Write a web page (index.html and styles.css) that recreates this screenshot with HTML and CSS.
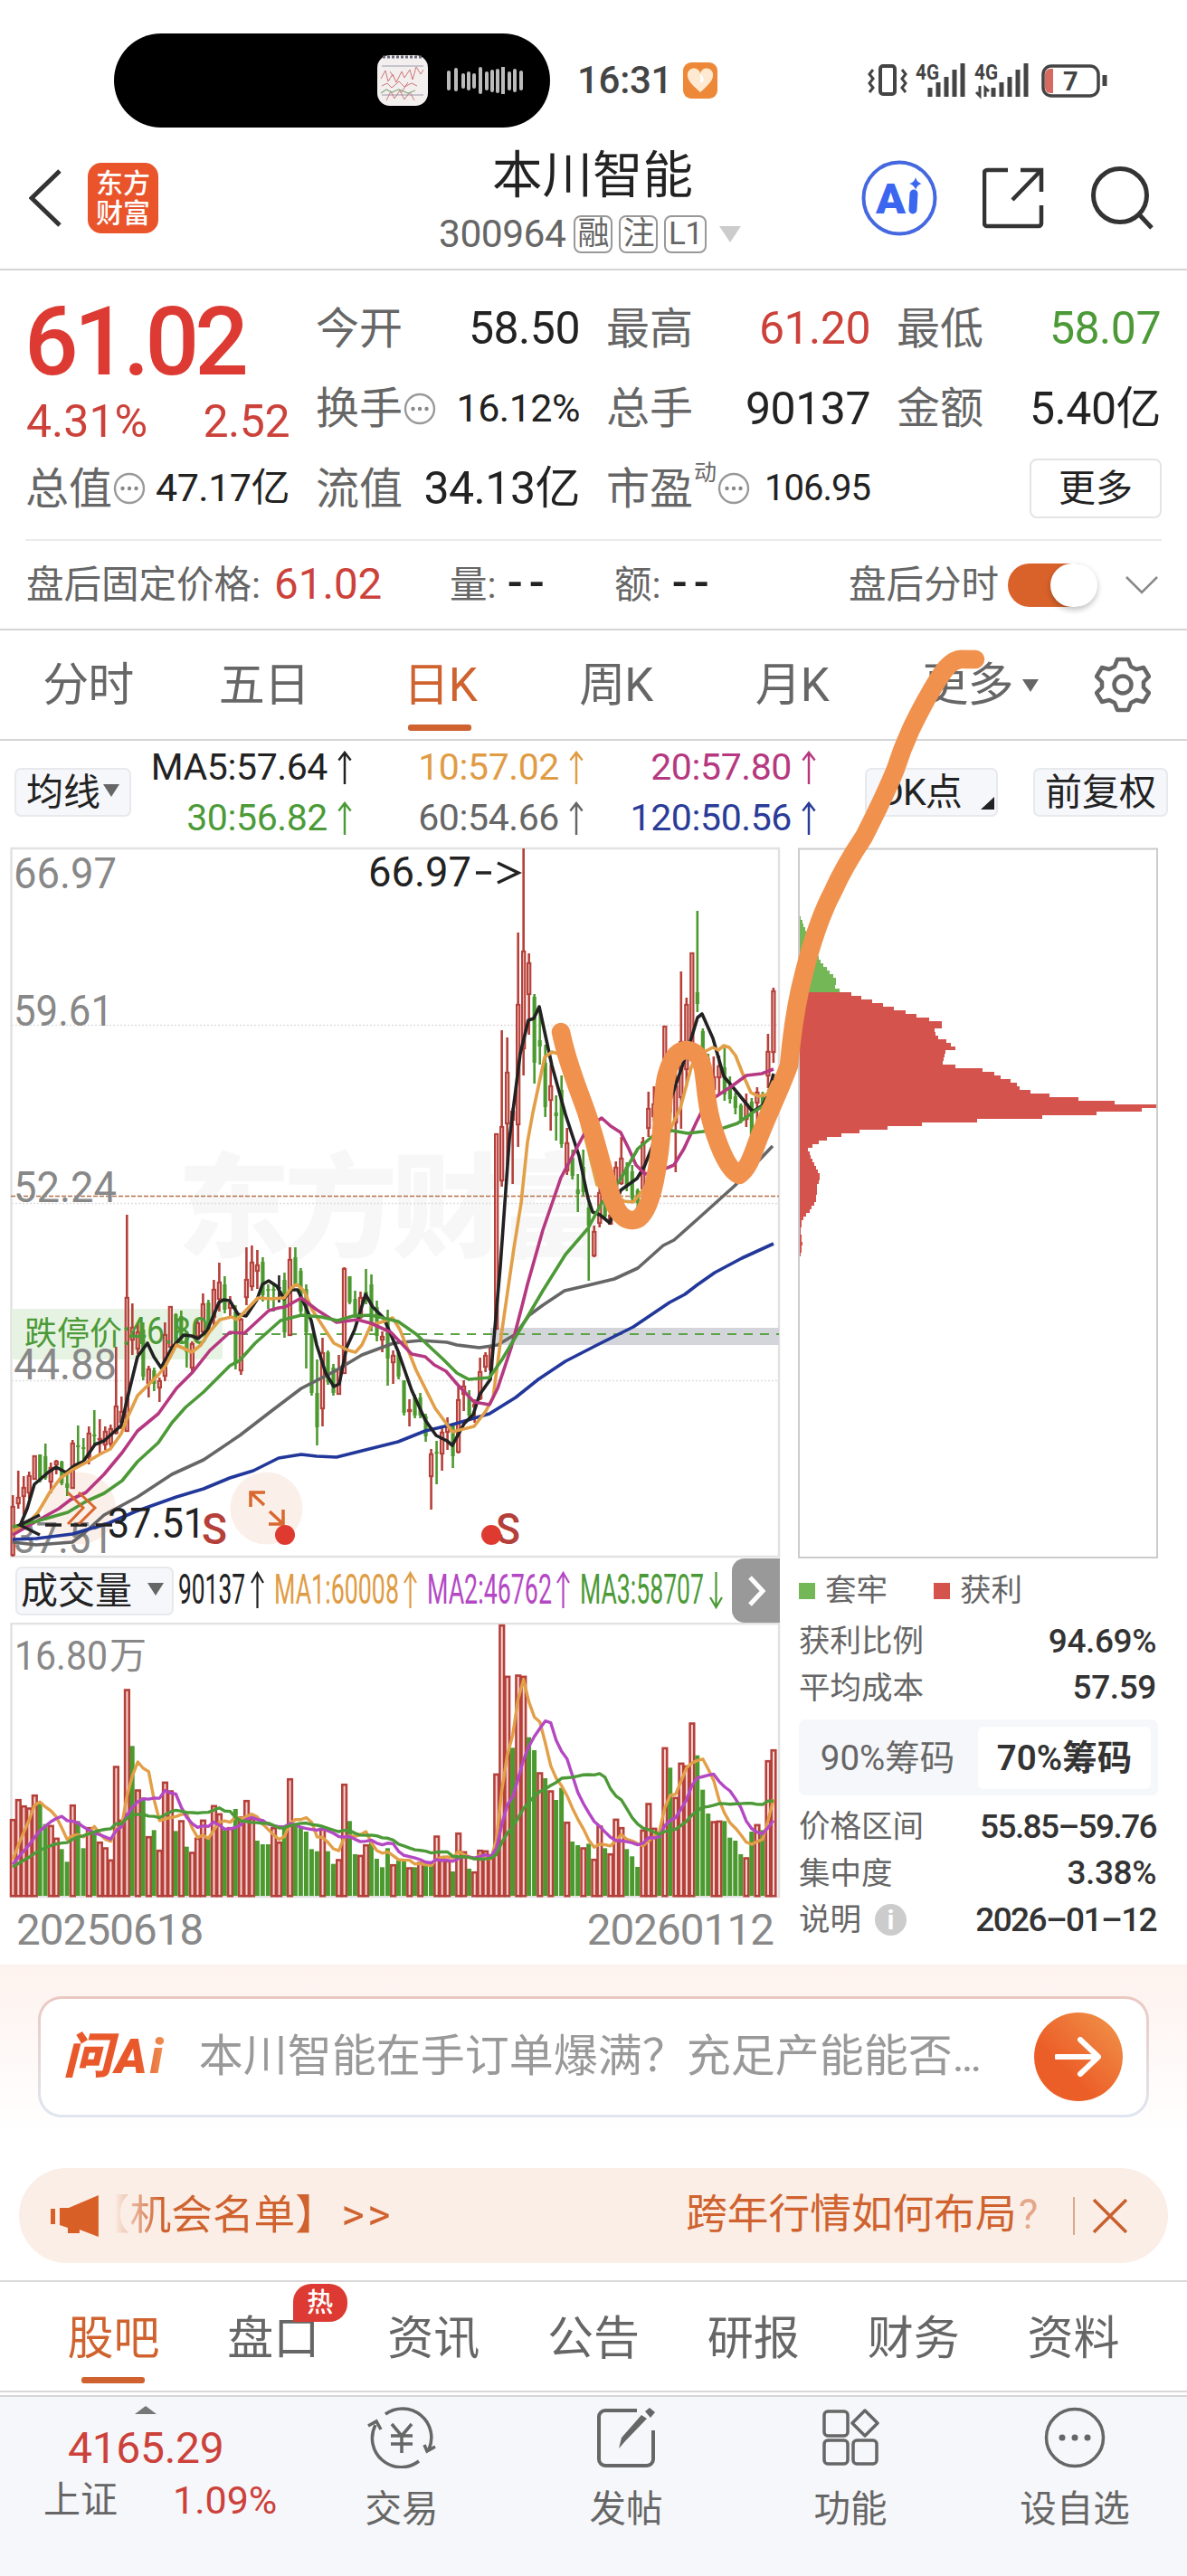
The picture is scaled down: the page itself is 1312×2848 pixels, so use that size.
FILE: index.html
```html
<!DOCTYPE html>
<html lang="zh-CN">
<head>
    <meta charset="UTF-8">
    <meta name="viewport" content="width=device-width, initial-scale=1.0">
    <title>本川智能 300964</title>
    <link rel="stylesheet" href="styles.css">
</head>
<body>

    <svg class="defs">
        <symbol id="up" viewBox="0 0 18 40"><path d="M9 39V2M2 11L9 2l7 9" fill="none" stroke="currentColor" stroke-width="2.6"/></symbol>
        <symbol id="more" viewBox="0 0 36 36"><circle cx="18" cy="18" r="16" fill="none" stroke="#999" stroke-width="2.4"/><circle cx="10.5" cy="18" r="2.2" fill="#888"/><circle cx="18" cy="18" r="2.2" fill="#888"/><circle cx="25.5" cy="18" r="2.2" fill="#888"/></symbol>
    </svg>

    <div class="page">

        <!-- Status bar -->
        <div class="status-bar">
            <div class="island">
                <svg width="56" height="56" viewBox="0 0 56 56">
                    <rect width="56" height="56" rx="14" fill="#f3efee"/>
                    <path d="M6 2h44" stroke="#667" stroke-width="3" stroke-dasharray="3 2"/>
                    <path d="M5 12h46M5 44h46" stroke="#99a" stroke-width="1"/>
                    <path d="M4 26l5-9 3 12 5-8 4 9 6-12 3 7 6-9 3 11 4-14 5 8 3-5M5 34l6-3 5 5 8-7 6 6 8-4 6 3M10 50l5-10 4 8 6-9 5 10 6-8 5 9M14 18l4 6M34 30l-8 12" fill="none" stroke="#c77" stroke-width="1"/>
                    <path d="M4 42l6-4 6 3 8-3 10 4 8-3" fill="none" stroke="#8a8" stroke-width="1.2"/>
                </svg>
                <svg width="84" height="30" viewBox="0 0 84 30">
                    <path d="M2 6v18M10 3v22M18 9v13M24 7v17M30 9v13M37 2v26M44 7v17M50 5v21M56 4v23M62 1v28M69 7v17M75 4v22M82 6v18" stroke="#bbb" stroke-width="4" stroke-linecap="round"/>
                </svg>
            </div>
            <span class="clock">16:31</span>
            <svg class="heart" width="38" height="40" viewBox="0 0 38 40">
                <rect width="38" height="40" rx="9" fill="#ec8838"/>
                <path d="M19 33C10 25 5 20 5 14.500a7 7 0 0 1 14-2 7 7 0 0 1 14 2C33 20 28 25 19 33z" fill="#ffe9d0"/>
                <path d="M19 12.500v10c5 0 5-5 0-10z" fill="#fff"/>
            </svg>
            <svg class="signals" width="266" height="44" viewBox="958 67 266 44">
                <g fill="none" stroke="#444" stroke-width="4">
                    <rect x="973" y="73" width="16" height="31" rx="3"/>
                    <path d="M965 77l-4 5 4 5-4 5 4 5-4 5M997 77l4 5-4 5 4 5-4 5 4 5" stroke-width="3"/>
                    <path d="M1028 97v10M1037 91v16M1046 85v22M1055 77v30M1064 70v37" stroke-width="5"/>
                    <path d="M1098 97v10M1107 91v16M1116 85v22M1125 77v30M1134 70v37" stroke-width="5"/>
                    <path d="M1083 95v11l-4-4M1089 107V97l4 4" stroke-width="3"/>
                    <rect x="1153" y="73" width="61" height="33" rx="9" stroke-width="3.500"/>
                    <path d="M1221 83v12" stroke-width="5"/>
                </g>
                <path d="M1164 76v27h-3a6 6 0 0 1-6-6V82a6 6 0 0 1 6-6z" fill="#d66a60"/>
                <text x="1012" y="88" font-size="23" font-weight="bold" fill="#444" textLength="26" lengthAdjust="spacingAndGlyphs">4G</text>
                <text x="1077" y="88" font-size="23" font-weight="bold" fill="#444" textLength="26" lengthAdjust="spacingAndGlyphs">4G</text>
                <text x="1175" y="100" font-size="29" font-weight="bold" fill="#444">7</text>
            </svg>
        </div>

        <!-- Title -->
        <div class="header">
            <svg class="back" width="36" height="64" viewBox="0 0 36 64"><path d="M34 2L3 32l31 30" fill="none" stroke="#333" stroke-width="5"/></svg>
            <div class="logo">东方<br>财富</div>
            <div class="title">
                <h1>本川智能</h1>
                <div class="code">300964<i>融</i><i>注</i><i class="l1">L1</i><b></b></div>
            </div>
            <div class="header-icons">
                <svg width="86" height="86" viewBox="0 0 86 86">
                    <circle cx="43" cy="43" r="39.500" fill="none" stroke="#4568e0" stroke-width="4"/>
                    <text x="17" y="60" font-size="47" font-weight="900" fill="#3a66f0" textLength="33" lengthAdjust="spacingAndGlyphs">A</text>
                    <path d="M59 38l-1 18" stroke="#3a66f0" stroke-width="9" stroke-linecap="round"/>
                    <path d="M61 20q1.500 6 7 7-5.500 1.500-7 7-1.500-5.500-7-7 5.500-1 7-7z" fill="#3a66f0"/>
                </svg>
                <svg width="70" height="70" viewBox="0 0 70 70">
                    <path d="M28 4H5a3 3 0 0 0-3 3v56a3 3 0 0 0 3 3h57a3 3 0 0 0 3-3V43M42 4h23v24M65 4L33 37" fill="none" stroke="#333" stroke-width="4.500"/>
                </svg>
                <svg width="70" height="72" viewBox="0 0 70 72">
                    <circle cx="33" cy="33" r="29.500" fill="none" stroke="#333" stroke-width="5"/>
                    <path d="M54 54l14 15" stroke="#333" stroke-width="5"/>
                </svg>
            </div>
        </div>

        <!-- Quote -->
        <div class="quote">
            <div class="col first">
                <div class="price">61.02</div>
                <div class="cell red change"><span>4.31%</span><span>2.52</span></div>
                <div class="cell"><label>总值</label><svg class="dots"><use href="#more"/></svg><span class="small">47.17亿</span></div>
            </div>
            <div class="col">
                <div class="cell"><label>今开</label><span>58.50</span></div>
                <div class="cell"><label>换手</label><svg class="dots"><use href="#more"/></svg><span class="small">16.12%</span></div>
                <div class="cell"><label>流值</label><span>34.13亿</span></div>
            </div>
            <div class="col">
                <div class="cell"><label>最高</label><span class="red">61.20</span></div>
                <div class="cell"><label>总手</label><span>90137</span></div>
                <div class="cell"><label>市盈<sup>动</sup></label><svg class="dots"><use href="#more"/></svg><span class="smaller">106.95</span></div>
            </div>
            <div class="col">
                <div class="cell"><label>最低</label><span class="green">58.07</span></div>
                <div class="cell"><label>金额</label><span>5.40亿</span></div>
                <div class="cell"><button class="more-btn">更多</button></div>
            </div>
        </div>

        <div class="after-hours">
            <span class="ah-label">盘后固定价格:</span><span class="ah-price">61.02</span>
            <span class="ah-vol">量: <em>--</em></span>
            <span class="ah-amt">额: <em>--</em></span>
            <span class="ah-switch">盘后分时</span>
            <div class="toggle"></div>
            <svg width="36" height="20" viewBox="0 0 36 20"><path d="M1 1l17 17L35 1" fill="none" stroke="#888" stroke-width="2.500"/></svg>
        </div>

        <div class="periods">
            <span>分时</span><span>五日</span><span class="active">日K</span><span>周K</span><span>月K</span><span>更多<b></b></span>
            <svg width="62" height="62" viewBox="-31 -31 62 62"><path d="M-6-28h12l3 8 6 3 8-2 6 10-6 6v6l6 6-6 10-8-2-6 3-3 8h-12l-3-8-6-3-8 2-6-10 6-6v-6l-6-6 6-10 8 2 6-3z" fill="none" stroke="#666" stroke-width="4.500" stroke-linejoin="round"/><circle r="9.500" fill="none" stroke="#666" stroke-width="4.500"/></svg>
        </div>

        <div class="indicators">
            <button class="chip-btn">均线<b></b></button>
            <div class="ma-grid">
                <span>MA5:57.64<svg><use href="#up"/></svg></span>
                <span class="c10">10:57.02<svg><use href="#up"/></svg></span>
                <span class="c20">20:57.80<svg><use href="#up"/></svg></span>
                <span class="green">30:56.82<svg><use href="#up"/></svg></span>
                <span class="c60">60:54.66<svg><use href="#up"/></svg></span>
                <span class="c120">120:50.56<svg><use href="#up"/></svg></span>
            </div>
            <button class="chip-btn dk">DK点<svg width="15" height="14" viewBox="0 0 15 14"><path d="M15 0v14H0z" fill="#222"/></svg></button>
            <button class="chip-btn">前复权</button>
        </div>

        <!-- Charts -->
        <div class="charts">
            <div class="left">
                <svg id="priceChart" width="872" height="793" viewBox="0 930 872 793">
                    <text class="mark" x="196" y="1380" font-size="125" textLength="480">东方财富</text>
                    <rect x="12.500" y="938" width="848.500" height="783" class="frame"/>
                    <path d="M13 1133.500h848M13 1330.500h848M13 1526.500h848" class="grid"/>
                    <rect x="542" y="1468" width="319" height="19" fill="#d3d5da"/>
                    <rect x="13" y="1447" width="233" height="56" rx="4" fill="#e6f3e2"/>
                    <path d="M12 1322.500h849" stroke="#b5714a" stroke-width="1.500" stroke-dasharray="5 2"/>
                    <path d="M246 1475h615" stroke="#5ca348" stroke-width="2" stroke-dasharray="10 8"/>
                    <circle cx="88" cy="1667.500" r="40" fill="#fbf0e9"/>
                    <circle cx="294.500" cy="1667.500" r="40" fill="#fbf0e9"/>
                    <g class="axis">
                        <text x="15" y="982" textLength="114" lengthAdjust="spacingAndGlyphs">66.97</text>
                        <text x="15" y="1134" textLength="110" lengthAdjust="spacingAndGlyphs">59.61</text>
                        <text x="15" y="1329" textLength="114" lengthAdjust="spacingAndGlyphs">52.24</text>
                        <text x="15" y="1525" textLength="114" lengthAdjust="spacingAndGlyphs">44.88</text>
                        <text x="15" y="1717" textLength="110" lengthAdjust="spacingAndGlyphs">37.51</text>
                    </g>
                    <g id="candles"></g>
                    <text x="27" y="1487" font-size="36" fill="#4c9a37">跌停价:</text>
                    <text x="142" y="1486" font-size="43" fill="#4c9a37" textLength="89" lengthAdjust="spacingAndGlyphs">46.80</text>
                    <g id="maLines"></g>
                    <text x="407" y="980" font-size="47" fill="#222" textLength="114" lengthAdjust="spacingAndGlyphs">66.97</text>
                    <path d="M526 965h17M550 954l23 11-23 11" fill="none" stroke="#222" stroke-width="3.500"/>
                    <path d="M44 1675l-22 11 22 11M50 1686h18M78 1686h18M106 1686h18" fill="none" stroke="#222" stroke-width="3.500"/>
                    <text x="119" y="1700" font-size="47" fill="#222" textLength="108" lengthAdjust="spacingAndGlyphs">37.51</text>
                    <path d="M75 1650l17 17-17 18M87 1650l18 17-18 18" fill="none" stroke="#d8682f" stroke-width="3"/>
                    <path d="M293 1650h-16v16M277 1650l15 14M297 1685h16v-16M313 1685l-15-14" fill="none" stroke="#d8682f" stroke-width="3.500"/>
                    <g fill="#b5403a" font-size="49" font-weight="500"><text x="223" y="1707" textLength="28" lengthAdjust="spacingAndGlyphs">S</text><text x="548" y="1707" textLength="27" lengthAdjust="spacingAndGlyphs">S</text></g>
                    <circle cx="315" cy="1697" r="11" fill="#de3a30"/>
                    <circle cx="543" cy="1697" r="11" fill="#de3a30"/>
                </svg>

                <div class="vol-head">
                    <button class="chip-btn">成交量<b></b></button>
                    <svg width="617" height="72" viewBox="192 1723 617 72" font-size="46">
                        <text x="197" y="1773" fill="#222" textLength="74" lengthAdjust="spacingAndGlyphs">90137</text>
                        <text x="303" y="1773" fill="#e09c44" textLength="138" lengthAdjust="spacingAndGlyphs">MA1:60008</text>
                        <text x="472" y="1773" fill="#b448c4" textLength="138" lengthAdjust="spacingAndGlyphs">MA2:46762</text>
                        <text x="641" y="1773" fill="#4c9a37" textLength="137" lengthAdjust="spacingAndGlyphs">MA3:58707</text>
                        <g fill="none" stroke-width="2.200">
                            <path d="M284.500 1778v-39M278 1750l6.500-11 6.500 11" stroke="#222"/>
                            <path d="M453.500 1778v-39M447 1750l6.500-11 6.500 11" stroke="#e09c44"/>
                            <path d="M622.500 1778v-39M616 1750l6.500-11 6.500 11" stroke="#b448c4"/>
                            <path d="M791.500 1738v39M785 1766l6.500 11 6.500-11" stroke="#4c9a37"/>
                        </g>
                    </svg>
                    <div class="next"><svg width="20" height="34" viewBox="0 0 20 34"><path d="M3 2l14 15L3 32" fill="none" stroke="#fff" stroke-width="5"/></svg></div>
                </div>

                <svg id="volumeChart" width="872" height="305" viewBox="0 1794 872 305">
                    <rect x="12.500" y="1795" width="848.500" height="302" class="frame"/>
                    <text x="16" y="1846" font-size="44" fill="#888" textLength="103" lengthAdjust="spacingAndGlyphs">16.80</text>
                    <text x="121" y="1845" font-size="41" fill="#888">万</text>
                    <g id="volumes"></g>
                </svg>
                <div class="dates"><span>20250618</span><span>20260112</span></div>
            </div>

            <div class="right">
                <svg id="chipChart" width="398" height="786" viewBox="882 937 398 786">
                    <g id="chips" shape-rendering="crispEdges"></g>
                    <rect x="883" y="938.500" width="396" height="783.500" fill="none" stroke="#ccc" stroke-width="2"/>
                </svg>
                <div class="legend"><i class="g"></i>套牢<i class="r"></i>获利</div>
                <div class="stat"><span>获利比例</span><b>94.69%</b></div>
                <div class="stat"><span>平均成本</span><b>57.59</b></div>
                <div class="segment"><span>90%筹码</span><span class="on">70%筹码</span></div>
                <div class="stat"><span>价格区间</span><b class="tight">55.85–59.76</b></div>
                <div class="stat"><span>集中度</span><b>3.38%</b></div>
                <div class="stat"><span>说明<em>i</em></span><b class="tight">2026–01–12</b></div>
            </div>
        </div>

        <!-- Ask AI -->
        <div class="ask">
            <div class="ask-card">
                <div class="ask-logo">问Ai</div>
                <p>本川智能在手订单爆满？充足产能能否<em>...</em></p>
                <div class="go"><svg width="52" height="44" viewBox="0 0 52 44"><path d="M2 22h44M28 3l20 19-20 19" fill="none" stroke="#fff" stroke-width="6" stroke-linecap="round" stroke-linejoin="round"/></svg></div>
            </div>
        </div>

        <div class="banner">
            <svg width="54" height="46" viewBox="0 0 54 46"><path d="M0 15h5v17H0zM10 14h10L53 0v46L32 38v4H19v-6l-9-3z" fill="#d85f26"/></svg>
            <span class="b-left">【机会名单】 <em>&gt;&gt;</em></span>
            <span class="b-right">跨年行情如何布局<em>?</em></span>
            <i></i>
            <svg width="38" height="38" viewBox="0 0 38 38"><path d="M1 1l36 36M37 1L1 37" stroke="#c9602f" stroke-width="3.500"/></svg>
        </div>

        <div class="tabs">
            <span class="active">股吧</span><span>盘口<b>热</b></span><span>资讯</span><span>公告</span><span>研报</span><span>财务</span><span>资料</span>
        </div>

        <!-- Bottom bar -->
        <div class="bottom">
            <div class="index">
                <i></i>
                <strong>4165.29</strong>
                <div><span>上证</span><em>1.09%</em></div>
            </div>
            <div class="nav-item">
                <svg width="76" height="68" viewBox="-38 -34 76 68"><g fill="none" stroke="#666" stroke-width="3.500"><path d="M-18-26A32 32 0 0 1 30 13M19 26A32 32 0 0 1-29-14M-37-13l9-5 5 9M37 10l-9 5-3-7"/><path d="M-11-15L0-2l11-13M0-2v19M-12-2h24M-12 7h24"/></g></svg>
                交易
            </div>
            <div class="nav-item">
                <svg width="66" height="68" viewBox="0 0 66 68"><path d="M45 4H10a7 7 0 0 0-7 7v47a7 7 0 0 0 7 7h46a7 7 0 0 0 7-7V26" fill="none" stroke="#666" stroke-width="4"/><path d="M56 13L32 38l-7 8 3-12L50 9z" fill="#666"/><path d="M54 5l5-4 6 5-5 6z" fill="#666"/></svg>
                发帖
            </div>
            <div class="nav-item">
                <svg width="64" height="64" viewBox="0 0 64 64"><g fill="none" stroke="#666" stroke-width="3.500"><rect x="3" y="3" width="26" height="27" rx="4"/><rect x="3" y="35" width="26" height="26" rx="4"/><rect x="35" y="35" width="26" height="26" rx="4"/><path d="M48 2l14 14-14 14-14-14z" stroke-linejoin="round"/></g></svg>
                功能
            </div>
            <div class="nav-item">
                <svg width="68" height="68" viewBox="0 0 68 68"><circle cx="34" cy="34" r="31.500" fill="none" stroke="#666" stroke-width="3.500"/><g fill="#666"><circle cx="20" cy="34" r="3.500"/><circle cx="34" cy="34" r="3.500"/><circle cx="48" cy="34" r="3.500"/></g></svg>
                设自选
            </div>
        </div>

        <!-- Freehand trend line over the tabs and both charts -->
        <svg class="scribble" width="500" height="660" viewBox="600 710 500 660">
            <path d="M620 1141C628 1180 640 1205 650 1235S664 1285 669 1300C677 1330 684 1350 700 1349C716 1348 724 1310 728 1280C734 1240 731 1205 738 1185C743 1168 750 1161 759 1161C773 1162 777 1175 779 1195C782 1222 784 1238 794 1264C800 1280 808 1295 817 1299C830 1290 833 1270 842 1250C852 1225 862 1205 872 1178C875 1145 879 1118 884 1095C892 1060 905 1015 921 985C932 960 945 940 955 925C965 905 978 880 990 850C1000 818 1012 795 1024 773C1040 745 1050 726 1067 729H1078" fill="none" stroke="#f0924e" stroke-width="20.500" stroke-linecap="round" stroke-linejoin="round"/>
        </svg>
    </div>

    <script src="chart.js"></script>
</body>
</html>
```
FILE: styles.css
```css
* {
    box-sizing: border-box;
}

body {
    margin: 0;
    background: #fff;
    color: #222;
    font-family: Roboto, "Noto Sans CJK SC", sans-serif;
    line-height: 1.2;
}

.page {
    position: relative;
    width: 1312px;
    height: 2848px;
    overflow: hidden;
}

button {
    font-family: inherit;
    color: inherit;
    padding: 0;
    white-space: nowrap;
}

i, em {
    font-style: normal;
}

.defs {
    display: none;
}

.red {
    color: #cc413a;
}

.green {
    color: #4c9a37;
}

/* status bar */
.status-bar {
    height: 178px;
    padding-left: 126px;
    display: flex;
    align-items: center;
}

.island {
    width: 482px;
    height: 104px;
    border-radius: 52px;
    background: #000;
    display: flex;
    align-items: center;
    justify-content: flex-end;
    gap: 21px;
    padding-right: 30px;
}

.clock {
    width: 115px;
    margin-left: 30px;
    font-size: 42px;
    font-weight: 500;
    letter-spacing: -0.300px;
    color: #444;
}

.heart {
    margin-left: 2px;
}

.signals {
    margin-left: 165px;
}

/* header */
.header {
    height: 121px;
    padding: 0 35px 0 32px;
    display: flex;
    align-items: center;
    border-bottom: 2px solid #d5d5d5;
}

.header > svg, .logo, .header-icons {
    margin-top: -37px;
}

.logo {
    width: 78px;
    height: 78px;
    margin-left: 29px;
    padding-top: 6px;
    border-radius: 15px;
    background: #e9542b;
    color: #fff;
    font-size: 30px;
    font-weight: 500;
    line-height: 33px;
    text-align: center;
}

.title {
    width: 340px;
    height: 121px;
    margin-left: 310px;
}

h1 {
    margin: -10px 0 0;
    padding-left: 59px;
    font-size: 55.500px;
    font-weight: 400;
    line-height: 56px;
    height: 65px;
}

.title .code {
    display: flex;
    align-items: center;
    color: #666;
    font-size: 42.500px;
    letter-spacing: -0.500px;
    line-height: 44px;
    margin-top: 5px;
}

.code i {
    width: 43px;
    height: 42px;
    margin-left: 7px;
    border: 2px solid #999;
    border-radius: 8px;
    font-size: 35px;
    line-height: 37px;
    text-align: center;
}

.code i:first-of-type {
    margin-left: 9px;
}

.code .l1 {
    width: 47px;
}

.code b {
    margin-left: 14px;
    border: 12px solid transparent;
    border-top: 18px solid #ccc;
    border-bottom: 0;
}

.header-icons {
    display: flex;
    align-items: center;
    gap: 49px;
    margin-left: 126px;
}

/* quote */
.quote {
    display: grid;
    grid-template-columns: repeat(4, 290px);
    gap: 31px;
    padding: 20px 30px 0;
    height: 297px;
}

.col {
    display: flex;
    flex-direction: column;
}

.cell {
    height: 88.500px;
    display: flex;
    align-items: center;
    justify-content: space-between;
    font-size: 50px;
    letter-spacing: -0.500px;
    white-space: nowrap;
}

.cell label {
    color: #666;
    font-size: 48px;
    letter-spacing: 0;
    margin: 1px 1px 0 -2px;
}

.cell label sup {
    font-size: 25px;
    line-height: 0;
    vertical-align: 26px;
    margin-left: 1px;
}

.cell .small {
    font-size: 43px;
    letter-spacing: -0.500px;
}

.cell .smaller {
    font-size: 40px;
    letter-spacing: -1px;
}

.dots {
    width: 36px;
    height: 36px;
    margin-right: auto;
}

.price {
    height: 114px;
    font-size: 105px;
    font-weight: 500;
    line-height: 120px;
    letter-spacing: -5px;
    margin-left: -3px;
    color: #dc3a32;
}

.cell.change {
    height: 63px;
    padding-top: 3px;
}

.cell.change span:first-child {
    margin-left: -1px;
    letter-spacing: 0;
}

.more-btn {
    width: 146px;
    height: 66px;
    margin-left: auto;
    margin-right: -1px;
    border: 2px solid #e4e4e4;
    border-radius: 8px;
    background: #fff;
    font-size: 41px;
    line-height: 58px;
}

.after-hours {
    height: 99px;
    margin: 0 28px;
    padding-left: 1px;
    border-top: 2px solid #ebebeb;
    display: flex;
    align-items: center;
    color: #666;
    font-size: 41.500px;
    white-space: nowrap;
}

.ah-label {
    width: 274px;
}

.ah-price {
    width: 194px;
    font-size: 47.500px;
    color: #cc413a;
}

.ah-vol {
    width: 182px;
}

.ah-amt {
    width: 259px;
}

.after-hours em {
    color: #222;
    font-size: 50px;
    line-height: 40px;
    letter-spacing: 7px;
    font-weight: 500;
    margin-left: 2px;
}

.toggle {
    width: 98px;
    height: 48px;
    margin: 0 32px 0 10px;
    border-radius: 24px;
    background: #d9622b;
}

.toggle::after {
    content: "";
    display: block;
    width: 52px;
    height: 48px;
    margin-left: 47px;
    border-radius: 26px;
    background: #fff;
    box-shadow: 0 3px 6px rgba(0, 0, 0, 0.25);
}

/* period tabs */
.periods {
    height: 124px;
    border-top: 2px solid #d5d5d5;
    border-bottom: 2px solid #d5d5d5;
    display: flex;
    align-items: center;
    color: #666;
    font-size: 51px;
    white-space: nowrap;
}

.periods span {
    width: 194.500px;
    height: 120px;
    line-height: 121px;
    text-align: center;
    letter-spacing: -1px;
}

.periods span:nth-child(6) {
    width: 237px;
    padding-left: 47px;
    text-align: left;
}

.periods .active, .tabs .active {
    color: #cf622e;
}

.periods .active::after, .tabs .active::after {
    content: "";
    display: block;
    width: 70px;
    height: 7px;
    margin: -17px auto 0;
    border-radius: 3px;
    background: #cf622e;
}

.periods b {
    display: inline-block;
    margin-left: 10px;
    vertical-align: 10px;
    border: 9px solid transparent;
    border-top: 14px solid #666;
    border-bottom: 0;
}

/* indicators */
.indicators {
    height: 111px;
    padding: 0 16px;
    display: flex;
    align-items: center;
}

.chip-btn {
    height: 54px;
    padding: 0 13px;
    border: 2px solid #e8e9ec;
    border-radius: 7px;
    background: #f6f7fa;
    font-size: 41px;
    line-height: 50px;
}

.chip-btn b {
    display: inline-block;
    margin-left: 3px;
    vertical-align: 9px;
    border: 9px solid transparent;
    border-top: 14px solid #666;
    border-bottom: 0;
}

.indicators .chip-btn {
    padding: 0 11px;
    margin-top: 3px;
}

.indicators .dk {
    width: 147px;
    margin: 3px 39px 0 51px;
    padding: 0 2px 0 14px;
    display: flex;
    align-items: center;
    justify-content: space-between;
    letter-spacing: -1px;
}

.indicators .dk svg {
    margin-top: 24px;
}

.ma-grid {
    display: grid;
    grid-template-columns: 247px 256px 257px;
    width: 760px;
    line-height: 56px;
    font-size: 41px;
    margin-top: 3px;
}

.ma-grid span {
    display: flex;
    justify-content: flex-end;
    align-items: center;
    height: 56px;
    letter-spacing: -0.400px;
}

.ma-grid svg {
    width: 22px;
    height: 38px;
    margin: 2px 0 0 8px;
}

.c10 { color: #e09c44; }
.c20 { color: #b63880; }
.c60 { color: #666; }
.c120 { color: #2a3c98; }

/* charts */
.charts {
    display: flex;
    height: 1242px;
}

.left {
    width: 872px;
}

.left > svg, .right > svg {
    display: block;
}

.frame {
    fill: none;
    stroke: #e2e2e2;
    stroke-width: 2.5;
}

.grid {
    fill: none;
    stroke: #dedede;
    stroke-width: 1.5;
    stroke-dasharray: 2 2;
}

.axis {
    fill: #888;
    font-size: 48px;
}

.mark {
    fill: #f7f7f7;
    font-weight: 900;
}

.vol-head {
    display: flex;
    align-items: center;
    height: 71px;
    padding-left: 17px;
}

.vol-head .chip-btn {
    width: 175px;
    padding: 0 4px;
    margin-top: 1px;
    text-align: left;
}

.vol-head .chip-btn b {
    margin-left: 17px;
}

.next {
    width: 53px;
    height: 71px;
    display: flex;
    align-items: center;
    justify-content: center;
    border-radius: 14px 0 0 14px;
    background: #999;
}

.dates {
    display: flex;
    justify-content: space-between;
    padding: 5px 17px 0 18px;
    font-size: 47.500px;
    letter-spacing: -0.900px;
    line-height: 60px;
    color: #888;
}

.right {
    width: 398px;
    margin-left: 10px;
    padding-top: 7px;
    font-size: 34.500px;
    color: #666;
}

.legend {
    height: 66px;
    padding: 6px 0 0 1px;
    display: flex;
    align-items: center;
}

.legend i {
    width: 18px;
    height: 18px;
    margin-right: 11px;
}

.legend .g {
    background: #74b757;
}

.legend .r {
    background: #d5534d;
    margin-left: 51px;
}

.stat {
    height: 51.500px;
    padding: 0 2px 0 1px;
    display: flex;
    align-items: center;
    justify-content: space-between;
}

.stat b {
    color: #333;
    font-size: 37px;
    font-weight: 500;
    letter-spacing: -0.400px;
}

.stat .tight {
    letter-spacing: -1.600px;
}

.stat em {
    display: inline-block;
    width: 35px;
    height: 35px;
    margin-left: 15px;
    border-radius: 50%;
    background: #ccc;
    color: #fff;
    font-size: 30px;
    font-weight: 700;
    line-height: 35px;
    text-align: center;
    vertical-align: 1px;
}

.segment {
    height: 84px;
    margin: 9px 0 9px 1px;
    padding: 7px;
    display: flex;
    border-radius: 7px;
    background: #f6f7fa;
    font-size: 38.500px;
    line-height: 70px;
}

.segment span {
    width: 191px;
    text-align: center;
    margin-top: 1px;
    height: 69px;
}

.segment span:first-child {
    padding-right: 9px;
    width: 191px;
    white-space: nowrap;
}

.segment .on {
    border-radius: 6px;
    background: #fff;
    color: #333;
    font-weight: 600;
}

/* ask ai */
.ask {
    height: 225px;
    padding: 35px 42px;
    background: linear-gradient(#fdf2ee, #fff 85%);
}

.ask-card {
    height: 134px;
    padding: 0 26px 0 25px;
    display: flex;
    align-items: center;
    border: 3px solid transparent;
    border-radius: 26px;
    background: linear-gradient(#fff, #fff) padding-box, linear-gradient(#ebc8c1, #dfe6f0) border-box;
}

.ask-logo {
    width: 150px;
    font-size: 54px;
    font-weight: 900;
    font-style: italic;
    letter-spacing: 3px;
    background: linear-gradient(90deg, #e8582a 55%, #f0a060 80%) text;
    color: transparent;
}

.ask p {
    width: 925px;
    margin: 0;
    font-size: 49px;
    color: #999;
    white-space: nowrap;
}

.ask p em {
    letter-spacing: -3px;
}

.go {
    width: 98px;
    height: 98px;
    flex: none;
    display: flex;
    align-items: center;
    justify-content: center;
    border-radius: 50%;
    background: linear-gradient(225deg, #f0964c, #ec5e28 65%);
}

.banner {
    height: 105px;
    margin: 0 21px;
    padding: 0 45px 0 35px;
    display: flex;
    align-items: center;
    border-radius: 53px;
    background: #fbeee6;
    color: #cf622e;
    font-size: 45.700px;
    white-space: nowrap;
}

.b-left {
    width: 662px;
    margin-left: -12px;
    background: linear-gradient(90deg, #fbeee6 28px, #cf622e 80px) text;
    color: transparent;
}

.b-left em {
    letter-spacing: 3px;
    margin-left: -6px;
    font-size: 49px;
}

.b-right {
    width: 429px;
}

.b-right em {
    opacity: 0.5;
    margin-left: 2px;
}

.banner i {
    width: 2px;
    height: 42px;
    margin-right: 20px;
    background: #d9a98e;
}

.tabs {
    height: 124px;
    margin-top: 19px;
    padding: 0 37px;
    border-top: 2px solid #d8d8d8;
    border-bottom: 2px solid #d8d8d8;
    display: flex;
    color: #666;
    font-size: 51px;
}

.tabs span {
    position: relative;
    width: 177px;
    line-height: 125px;
    height: 120px;
    text-align: center;
}

.tabs .active::after {
    margin-top: -20px;
}

.tabs b {
    position: absolute;
    left: 110px;
    top: 2px;
    width: 60px;
    height: 42px;
    border-radius: 20px 20px 20px 0;
    background: #dc3a32;
    color: #fff;
    font-size: 29px;
    font-weight: 500;
    line-height: 42px;
}

/* bottom bar */
.bottom {
    height: 204px;
    margin-top: 3px;
    border-top: 2px solid #d8d8d8;
    background: #f6f7fa;
    display: flex;
    color: #666;
}

.index {
    width: 320px;
    padding-top: 10px;
}

.index i {
    display: block;
    width: 0;
    margin-left: 149px;
    border: 12.500px solid transparent;
    border-bottom: 9px solid #777;
    border-top: 0;
}

.index strong {
    display: block;
    margin: 8px 0 0 75px;
    font-size: 48px;
    font-weight: 400;
    line-height: 60px;
    letter-spacing: -0.300px;
    color: #cc413a;
}

.index div {
    display: flex;
    align-items: center;
    height: 56px;
    margin: 0 0 0 48px;
    font-size: 41px;
    gap: 61px;
}

.index em {
    font-size: 43px;
    color: #cc413a;
}

.nav-item {
    width: 248px;
    padding-top: 11px;
    display: flex;
    flex-direction: column;
    align-items: center;
    font-size: 40.500px;
    line-height: 50px;
}

.nav-item svg {
    height: 68px;
    margin-bottom: 20px;
}

.scribble {
    position: absolute;
    left: 600px;
    top: 710px;
}
```
FILE: chart.js
```js
const NS = "http://www.w3.org/2000/svg";
const RED = "#b5403a";
const GREEN = "#4c9a2f";
const BLACK = "#222";

const x = i => 14.2 + 6.005 * i;

function add(parent, tag, attrs) {
    const el = document.createElementNS(NS, tag);
    for (const key in attrs) el.setAttribute(key, attrs[key]);
    document.getElementById(parent).appendChild(el);
}

// high, body top, body bottom, low
const candles = `r1653,1665,1720,1721 r1626,1655,1663,1668 r1632,1644,1655,1675 r1627,1631,1651,1657 r1609,1609,1636,1636
g1608,1608,1637,1639 g1596,1610,1634,1636 r1617,1622,1639,1651 r1614,1615,1620,1630 g1615,1616,1640,1642
g1629,1640,1645,1654 r1592,1595,1646,1646 g1576,1598,1600,1617 g1590,1600,1602,1617 r1577,1584,1611,1619
g1559,1586,1588,1597 r1569,1590,1592,1607 r1577,1582,1598,1603 r1575,1579,1597,1600 r1489,1554,1585,1586
r1544,1560,1573,1580 r1343,1434,1583,1583 r1441,1467,1482,1498 r1462,1472,1492,1497 g1462,1470,1522,1526
r1510,1513,1530,1545 g1512,1515,1530,1538 r1523,1526,1535,1550 r1462,1475,1522,1527 r1444,1444,1490,1490
g1452,1453,1485,1487 g1449,1455,1480,1483 g1472,1473,1495,1512 r1483,1485,1513,1518 r1460,1462,1478,1478
r1430,1441,1473,1475 g1437,1440,1470,1473 r1415,1425,1457,1468 r1396,1417,1437,1450 g1411,1420,1448,1452
r1433,1440,1447,1455 g1443,1450,1508,1514 r1457,1458,1516,1520 r1379,1414,1435,1443 r1377,1395,1423,1427
r1382,1398,1406,1425 g1390,1395,1432,1439 g1420,1425,1426,1447 g1418,1425,1426,1450 k1410,1423,1425,1440
g1407,1415,1473,1479 r1379,1392,1477,1477 g1379,1390,1420,1423 g1402,1405,1450,1453 g1420,1425,1473,1513
g1475,1475,1540,1543 g1503,1540,1578,1598 r1479,1495,1558,1577 g1493,1495,1528,1531 g1508,1512,1540,1543
r1498,1513,1542,1542 r1401,1402,1519,1519 g1411,1411,1440,1442 g1427,1436,1455,1457 r1428,1434,1457,1458
g1403,1428,1438,1442 g1409,1420,1465,1472 g1438,1445,1477,1483 r1472,1477,1482,1495 g1448,1460,1502,1532
r1493,1498,1507,1530 g1495,1495,1522,1525 g1526,1526,1562,1565 r1547,1558,1561,1577 g1542,1545,1565,1568
g1540,1545,1565,1568 g1563,1566,1588,1594 r1602,1607,1633,1669 g1593,1605,1607,1641 r1579,1583,1608,1626
r1567,1577,1584,1603 g1573,1575,1610,1623 r1533,1547,1606,1607 r1526,1532,1542,1560 g1537,1545,1565,1570
r1547,1552,1556,1573 r1501,1516,1547,1548 r1495,1498,1512,1517 r1488,1489,1515,1520 r1253,1253,1470,1470
r1139,1245,1306,1312 r1147,1185,1243,1288 r1225,1228,1239,1309 r1031,1110,1244,1268 r938,1051,1160,1189
r1054,1064,1100,1144 g1099,1102,1175,1198 g1117,1150,1157,1177 g1155,1175,1224,1235 r1177,1200,1217,1250
g1211,1230,1234,1261 g1189,1205,1265,1269 r1247,1263,1295,1299 g1271,1280,1300,1304 g1298,1315,1320,1340
g1271,1290,1318,1322 g1327,1335,1355,1416 r1355,1361,1389,1390 r1303,1318,1353,1357 g1323,1330,1345,1347
r1340,1343,1354,1354 r1284,1290,1320,1325 r1257,1280,1309,1310 g1285,1290,1312,1317 g1288,1295,1325,1328
g1314,1316,1330,1335 r1257,1262,1315,1323 r1207,1225,1248,1257 r1201,1220,1235,1240 g1210,1215,1260,1270
r1134,1134,1195,1200 g1170,1180,1230,1240 r1170,1200,1242,1296 r1074,1151,1214,1248 r1103,1110,1183,1202
r1053,1053,1160,1160 g1007,1097,1110,1119 g1137,1140,1165,1180 g1165,1170,1200,1215 r1168,1190,1205,1212
r1167,1178,1192,1210 g1158,1180,1210,1217 g1190,1200,1215,1220 g1208,1212,1225,1232 g1220,1222,1238,1242
r1209,1220,1238,1246 g1214,1218,1255,1263 r1202,1207,1220,1248 g1207,1210,1225,1230 r1143,1162,1190,1203
r1092,1095,1164,1175`.split(/\s+/);

candles.forEach((row, i) => {
    const [hi, top, bot, lo] = row.slice(1).split(",").map(Number);
    const color = { r: RED, g: GREEN, k: BLACK }[row[0]];
    const h = Math.max(bot - top, 2);
    add("candles", "path", { d: `M${x(i)} ${hi}V${top}M${x(i)} ${bot}V${lo}`, stroke: color, "stroke-width": 2.6 });
    if (row[0] === "r") {
        add("candles", "rect", { x: x(i) - 1.6, y: top + 0.9, width: 3.2, height: Math.max(h - 1.8, 0.5), fill: "#f0c4c0", stroke: color, "stroke-width": 2.1 });
    } else {
        add("candles", "rect", { x: x(i) - 2.1, y: top, width: 4.2, height: h, fill: color });
    }
});

const averages = {
    "#666": "14,1705 40,1708 80,1705 93,1695 115,1675 152,1655 190,1630 225,1614 265,1587 300,1560 333,1535 370,1516 400,1498 435,1485 465,1482 494,1484 505,1487 530,1490 550,1487 570,1475 585,1454 600,1443 624,1427 650,1421 679,1414 705,1402 733,1377 745,1371 772,1347 812,1311 854,1267",
    "#22379a": "14,1702 40,1701 80,1696 120,1684 150,1671 195,1655 225,1646 254,1634 280,1626 308,1612 333,1608 350,1610 372,1611 400,1604 440,1594 470,1582 500,1575 541,1563 570,1545 595,1525 625,1505 660,1487 700,1467 740,1440 757,1431 770,1421 790,1407 820,1391 855,1375",
    "#222": "22,1687 30,1668 38,1641 45,1635 53,1628 62,1622 73,1628 83,1620 92,1616 105,1597 115,1593 134,1576 141,1545 152,1500 163,1485 170,1500 178,1512 190,1490 203,1476 212,1477 219,1480 229,1471 242,1440 247,1437 254,1438 263,1453 272,1455 284,1437 290,1420 297,1416 306,1422 314,1436 322,1426 329,1426 338,1445 344,1460 350,1487 360,1518 369,1533 375,1530 383,1490 392,1470 404,1431 412,1445 424,1457 440,1494 455,1537 470,1570 482,1587 494,1593 500,1598 513,1574 523,1564 530,1542 542,1525 553,1400 563,1260 575,1165 584,1128 590,1126 596,1113 610,1178 625,1232 640,1278 650,1325 655,1340 663,1343 674,1352 686,1316 697,1308 704,1303 712,1290 720,1270 735,1230 745,1205 755,1176 765,1145 771,1125 776,1121 788,1148 800,1190 815,1208 832,1229 843,1222 849,1210 855,1187",
    "#e29f47": "14,1693 30,1685 42,1672 55,1650 67,1634 80,1625 95,1617 110,1608 122,1602 134,1585 141,1567 152,1543 175,1520 183,1510 195,1487 212,1495 222,1487 232,1472 243,1459 256,1456 262,1459 285,1435 300,1436 314,1435 322,1424 328,1420 336,1427 345,1448 356,1465 369,1485 385,1493 393,1495 400,1487 410,1465 424,1461 434,1457 442,1470 460,1515 481,1557 500,1583 524,1577 537,1560 545,1545 555,1470 568,1380 576,1330 583,1263 589,1230 602,1169 610,1163 617,1165 640,1230 660,1310 690,1328 700,1329 715,1310 743,1244 752,1225 764,1180 770,1165 780,1162 788,1158 794,1161 800,1156 806,1158 813,1167 822,1190 830,1208 838,1212 848,1210 855,1195",
    "#b63880": "14,1697 40,1682 65,1668 78,1658 95,1650 115,1630 135,1606 152,1582 175,1563 195,1535 213,1517 232,1493 254,1473 270,1474 297,1449 308,1446 315,1445 333,1435 350,1448 372,1462 395,1459 410,1463 432,1473 455,1497 470,1500 480,1509 493,1516 505,1530 524,1550 541,1553 550,1535 565,1490 578,1440 583,1420 600,1360 620,1302 645,1255 652,1245 665,1236 675,1245 686,1252 695,1270 703,1288 713,1298 725,1295 738,1291 745,1288 756,1270 770,1240 780,1220 795,1210 810,1200 825,1189 842,1187 855,1182",
    "#4c9a37": "14,1688 40,1682 75,1672 95,1660 115,1651 135,1637 152,1616 175,1595 190,1573 205,1556 225,1539 254,1510 265,1504 282,1485 310,1460 333,1454 355,1456 373,1460 390,1455 410,1454 440,1461 460,1475 490,1503 505,1518 518,1525 541,1523 555,1503 580,1461 600,1427 625,1387 650,1358 665,1330 685,1305 705,1270 725,1253 743,1250 760,1253 777,1251 800,1247 815,1242 832,1230 845,1222 855,1200"
};

for (const color in averages) {
    add("maLines", "polyline", { points: averages[color], fill: "none", stroke: color, "stroke-width": 3.6, "stroke-linejoin": "round" });
}

// bar tops in thirds of a pixel, measured down from y = 1710
const volumes = `r903 r837 r858 r865 r822 g850 g920 r923 r965 g1003 g1045 r855 g910 g1000 r930 g945 r978 r997 r1037 r727
r905 r472 g661 r805 g832 r960 g940 r1005 r779 r808 g943 r907 g995 r1012 r965 r905 g960 r857 r884 g940
r930 g870 r895 r840 r900 g975 g987 g987 r930 r978 g925 r768 g925 g930 g945 g1003 g1010 r935 g1010 g1052
r1036 r786 g910 g1020 r1022 r987 g975 g1035 g1063 g1000 r1053 g1040 g1043 r1063 g1063 r1045 g1058 g1058 r958 r1030
r1040 g1077 r948 r1010 g1068 r1077 r1005 r1007 r1020 r752 r258 r428 g667 r424 r428 g632 g675 r748 g768 r808
g840 g800 r912 g978 g990 r997 g985 r1035 r925 g1000 r1017 r902 r930 g1003 g1027 g1062 r938 r850 r932 g945
r665 g733 r830 r716 r725 r583 g692 g806 g885 r910 r908 g910 g965 g975 g1020 r1030 g945 r920 g940 r708
r672`.split(/\s+/);

const tops = volumes.map(v => 1710 + v.slice(1) / 3);

volumes.forEach((v, i) => {
    if (v[0] === "r") {
        add("volumes", "rect", { x: x(i) - 2.2, y: tops[i] + 1.2, width: 4.6, height: 2095 - tops[i], fill: "#f7d6d3", stroke: RED, "stroke-width": 2.6 });
    } else {
        add("volumes", "rect", { x: x(i) - 2.6, y: tops[i], width: 5, height: 2096 - tops[i], fill: GREEN });
    }
});

function volumeAverage(n, color) {
    const padded = Array(n).fill(2067).concat(tops);
    const points = tops.map((t, i) => {
        const part = padded.slice(i + 1, i + 1 + n);
        return x(i) + "," + part.reduce((a, b) => a + b, 0) / n;
    });
    add("volumes", "polyline", { points: points.join(" "), fill: "none", stroke: color, "stroke-width": 3.4, "stroke-linejoin": "round" });
}

volumeAverage(5, "#e29f47");
volumeAverage(10, "#b448c4");
volumeAverage(20, "#4c9a37");

// chip distribution outline: y, right edge
const chips = [[1008, 883], [1037, 893], [1063, 907], [1083, 924], [1092, 923], [1096, 929], [1098, 938], [1104, 955], [1114, 985], [1122, 1010], [1129, 1034], [1133, 1047], [1138, 1033], [1146, 1035], [1152, 1048], [1159, 1056], [1162, 1045], [1176, 1042], [1180, 1060], [1184, 1094], [1192, 1108], [1197, 1123], [1205, 1128], [1211, 1160], [1216, 1200], [1219, 1232], [1223, 1279], [1227, 1262], [1231, 1212], [1235, 1152], [1239, 1080], [1244, 1004], [1251, 950], [1256, 925], [1260, 910], [1266, 900], [1270, 893], [1278, 896], [1290, 901], [1301, 907], [1312, 903], [1327, 902], [1339, 895], [1348, 887], [1360, 884.5], [1376, 887], [1390, 884.5], [1660, 883]];

for (let y = 1011; y < 1660; y += 4) {
    const k = chips.findIndex(c => c[0] > y);
    const a = chips[k - 1], b = chips[k];
    const edge = a[1] + (b[1] - a[1]) * (y - a[0]) / (b[0] - a[0]);
    add("chips", "rect", { x: 883, y: y - 2, width: edge - 883, height: 4, fill: y < 1097 ? "#74b757" : "#d5534d" });
}
```
